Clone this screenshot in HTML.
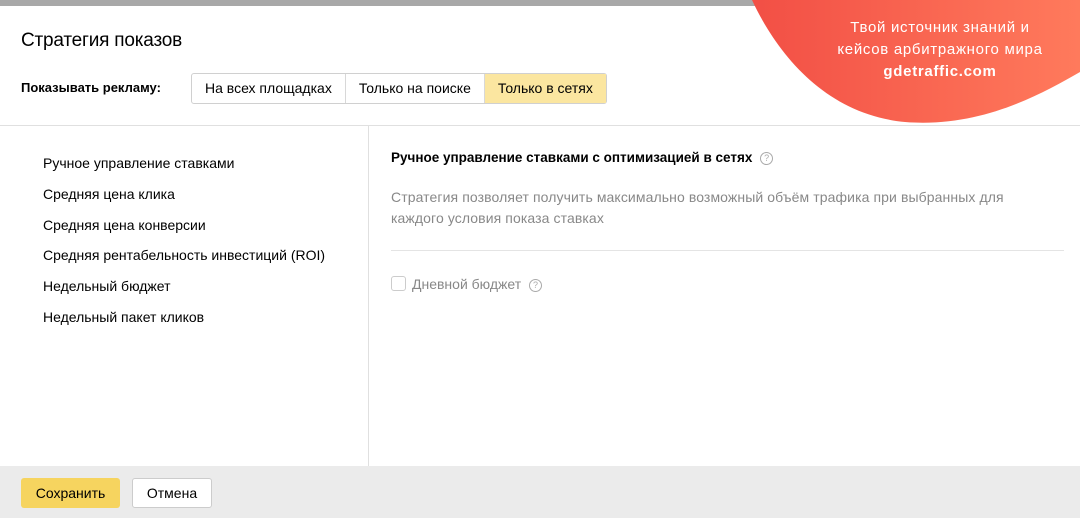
<!DOCTYPE html>
<html><head><meta charset="utf-8"><style>
body{margin:0;width:1080px;height:518px;overflow:hidden;background:#fff;font-family:"Liberation Sans","DejaVu Sans",sans-serif;color:#000;position:relative}
.top{position:absolute;left:0;top:0;width:1080px;height:6px;background:#a8a8a8}
h1{position:absolute;left:21px;top:30px;margin:0;font-size:19px;font-weight:normal;letter-spacing:-0.2px}
.lbl{position:absolute;left:21px;top:80px;font-size:13px;font-weight:bold}
.seg{position:absolute;left:191px;top:73px;height:29px;display:flex;border:1px solid #d0d0d0;border-radius:3px;font-size:14px}
.seg div{padding:0 13px;line-height:29px;border-right:1px solid #d8d8d8}
.seg div:last-child{border-right:0;background:#fbe6a0}
.hr{position:absolute;left:0;top:125px;width:1080px;height:1px;background:#e0e0e0}
.vr{position:absolute;left:368px;top:126px;width:1px;height:340px;background:#e0e0e0}
ul{position:absolute;left:43px;top:155px;margin:0;padding:0;list-style:none;font-size:14px}
ul li{height:30.8px}
.t{position:absolute;left:391px;top:150px;font-size:13.5px;font-weight:bold}
.q{display:inline-block;width:11px;height:11px;border:1px solid #aaa;border-radius:50%;font-size:9px;line-height:11px;text-align:center;color:#aaa;font-weight:normal;vertical-align:1px;margin-left:4px}
.d{position:absolute;left:391px;top:187px;font-size:14px;color:#888;line-height:21px;letter-spacing:0.1px}
.hr2{position:absolute;left:391px;top:250px;width:673px;height:1px;background:#e4e4e4}
.cb{position:absolute;left:391px;top:276px;font-size:14px;color:#888}
.cb span.b{display:inline-block;width:13px;height:13px;border:1px solid #ccc;border-radius:3px;vertical-align:-2px;margin-right:6px}
.foot{position:absolute;left:0;top:466px;width:1080px;height:52px;background:#ebebeb}
.btn{position:absolute;top:478px;height:30px;line-height:30px;font-size:14px;border-radius:3px;text-align:center}
.s{left:21px;width:99px;background:#f6d45f}
.c{left:132px;width:78px;background:#fff;border:1px solid #ccc;height:28px;line-height:28px}
.promo{position:absolute;left:795px;top:17px;width:290px;text-align:center;color:#fff;font-size:15px;line-height:22px;letter-spacing:0.7px}
</style></head><body>
<div class="top"></div>
<svg style="position:absolute;left:0;top:0" width="1080" height="130">
<defs><linearGradient id="g" x1="0" x2="1"><stop offset="0" stop-color="#f24f45"/><stop offset="1" stop-color="#ff7a5c"/></linearGradient></defs>
<path d="M752 0 C780 60 830 115 905 122 C980 128 1040 95 1080 72 L1080 0 Z" fill="url(#g)"/>
</svg>
<div class="promo">Твой источник знаний и<br>кейсов арбитражного мира<br><b>gdetraffic.com</b></div>
<h1>Стратегия показов</h1>
<div class="lbl">Показывать рекламу:</div>
<div class="seg"><div>На всех площадках</div><div>Только на поиске</div><div>Только в сетях</div></div>
<div class="hr"></div><div class="vr"></div>
<ul><li>Ручное управление ставками</li><li>Средняя цена клика</li><li>Средняя цена конверсии</li><li>Средняя рентабельность инвестиций (ROI)</li><li>Недельный бюджет</li><li>Недельный пакет кликов</li></ul>
<div class="t">Ручное управление ставками с оптимизацией в сетях <span class="q">?</span></div>
<div class="d">Стратегия позволяет получить максимально возможный объём трафика при выбранных для<br>каждого условия показа ставках</div>
<div class="hr2"></div>
<div class="cb"><span class="b"></span>Дневной бюджет <span class="q">?</span></div>
<div class="foot"></div>
<div class="btn s">Сохранить</div>
<div class="btn c">Отмена</div>
</body></html>
